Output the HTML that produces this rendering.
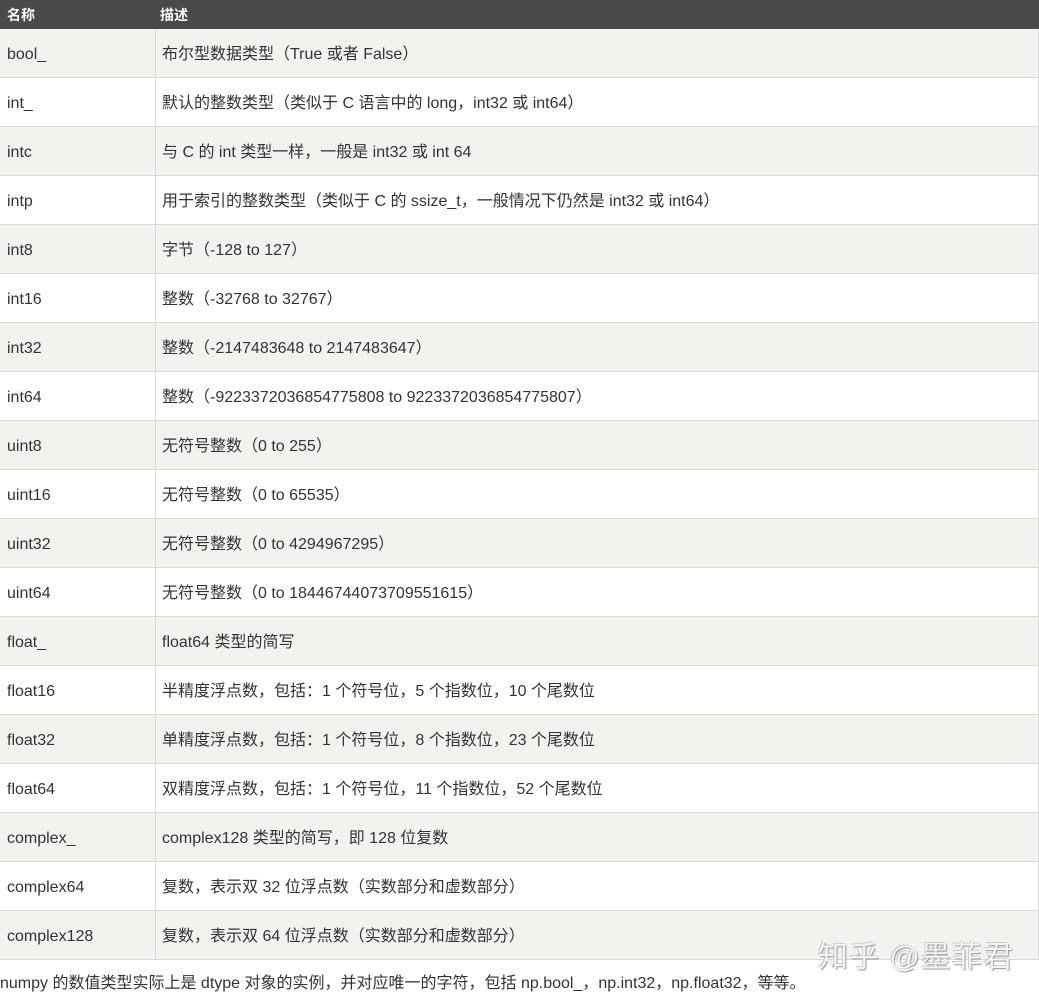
<!DOCTYPE html>
<html><head><meta charset="utf-8"><style>
body{margin:0;width:1039px;height:998px;background:#fff;font-family:"Liberation Sans","Noto Sans CJK SC",sans-serif;color:#333;position:relative;overflow:hidden}
.h{position:absolute;left:0;top:0;width:1039px;height:29px;background:#4b4a48;color:#fff;font-weight:bold;font-size:14px;line-height:18px}
.h span{position:absolute;top:6px}
.r{position:absolute;left:0;width:1038px;height:48px;border-bottom:1px solid #d8d8d8;border-right:1px solid #d8d8d8;font-size:16px;line-height:20px}
.r:nth-child(odd){background:#f3f2ee}
.r .a{position:absolute;left:7px;top:16px}
.r .b{position:absolute;left:162px;top:16px}
.r:before{content:"";position:absolute;left:155px;top:0;height:48px;border-left:1px solid #d8d8d8}
.wm{position:absolute;left:818px;top:940px;font-size:30px;line-height:36px;color:#f4f4f4;text-shadow:1px 1px 1px #999,-1px -1px 0 #ccc;letter-spacing:1px}
.cap{position:absolute;left:0;top:974px;font-size:16px;line-height:20px}
</style></head><body>
<div class="h"><span style="left:7px">名称</span><span style="left:160px">描述</span></div>
<div style="position:absolute;left:0;top:29px">
<div class="r" style="top:0"><span class="a">bool_</span><span class="b">布尔型数据类型（True 或者 False）</span></div>
<div class="r" style="top:49px"><span class="a">int_</span><span class="b">默认的整数类型（类似于 C 语言中的 long，int32 或 int64）</span></div>
<div class="r" style="top:98px"><span class="a">intc</span><span class="b">与 C 的 int 类型一样，一般是 int32 或 int 64</span></div>
<div class="r" style="top:147px"><span class="a">intp</span><span class="b">用于索引的整数类型（类似于 C 的 ssize_t，一般情况下仍然是 int32 或 int64）</span></div>
<div class="r" style="top:196px"><span class="a">int8</span><span class="b">字节（-128 to 127）</span></div>
<div class="r" style="top:245px"><span class="a">int16</span><span class="b">整数（-32768 to 32767）</span></div>
<div class="r" style="top:294px"><span class="a">int32</span><span class="b">整数（-2147483648 to 2147483647）</span></div>
<div class="r" style="top:343px"><span class="a">int64</span><span class="b">整数（-9223372036854775808 to 9223372036854775807）</span></div>
<div class="r" style="top:392px"><span class="a">uint8</span><span class="b">无符号整数（0 to 255）</span></div>
<div class="r" style="top:441px"><span class="a">uint16</span><span class="b">无符号整数（0 to 65535）</span></div>
<div class="r" style="top:490px"><span class="a">uint32</span><span class="b">无符号整数（0 to 4294967295）</span></div>
<div class="r" style="top:539px"><span class="a">uint64</span><span class="b">无符号整数（0 to 18446744073709551615）</span></div>
<div class="r" style="top:588px"><span class="a">float_</span><span class="b">float64 类型的简写</span></div>
<div class="r" style="top:637px"><span class="a">float16</span><span class="b">半精度浮点数，包括：1 个符号位，5 个指数位，10 个尾数位</span></div>
<div class="r" style="top:686px"><span class="a">float32</span><span class="b">单精度浮点数，包括：1 个符号位，8 个指数位，23 个尾数位</span></div>
<div class="r" style="top:735px"><span class="a">float64</span><span class="b">双精度浮点数，包括：1 个符号位，11 个指数位，52 个尾数位</span></div>
<div class="r" style="top:784px"><span class="a">complex_</span><span class="b">complex128 类型的简写，即 128 位复数</span></div>
<div class="r" style="top:833px"><span class="a">complex64</span><span class="b">复数，表示双 32 位浮点数（实数部分和虚数部分）</span></div>
<div class="r" style="top:882px"><span class="a">complex128</span><span class="b">复数，表示双 64 位浮点数（实数部分和虚数部分）</span></div>
</div>
<div class="wm">知乎 @墨菲君</div>
<div class="cap">numpy 的数值类型实际上是 dtype 对象的实例，并对应唯一的字符，包括 np.bool_，np.int32，np.float32，等等。</div>
</body></html>
